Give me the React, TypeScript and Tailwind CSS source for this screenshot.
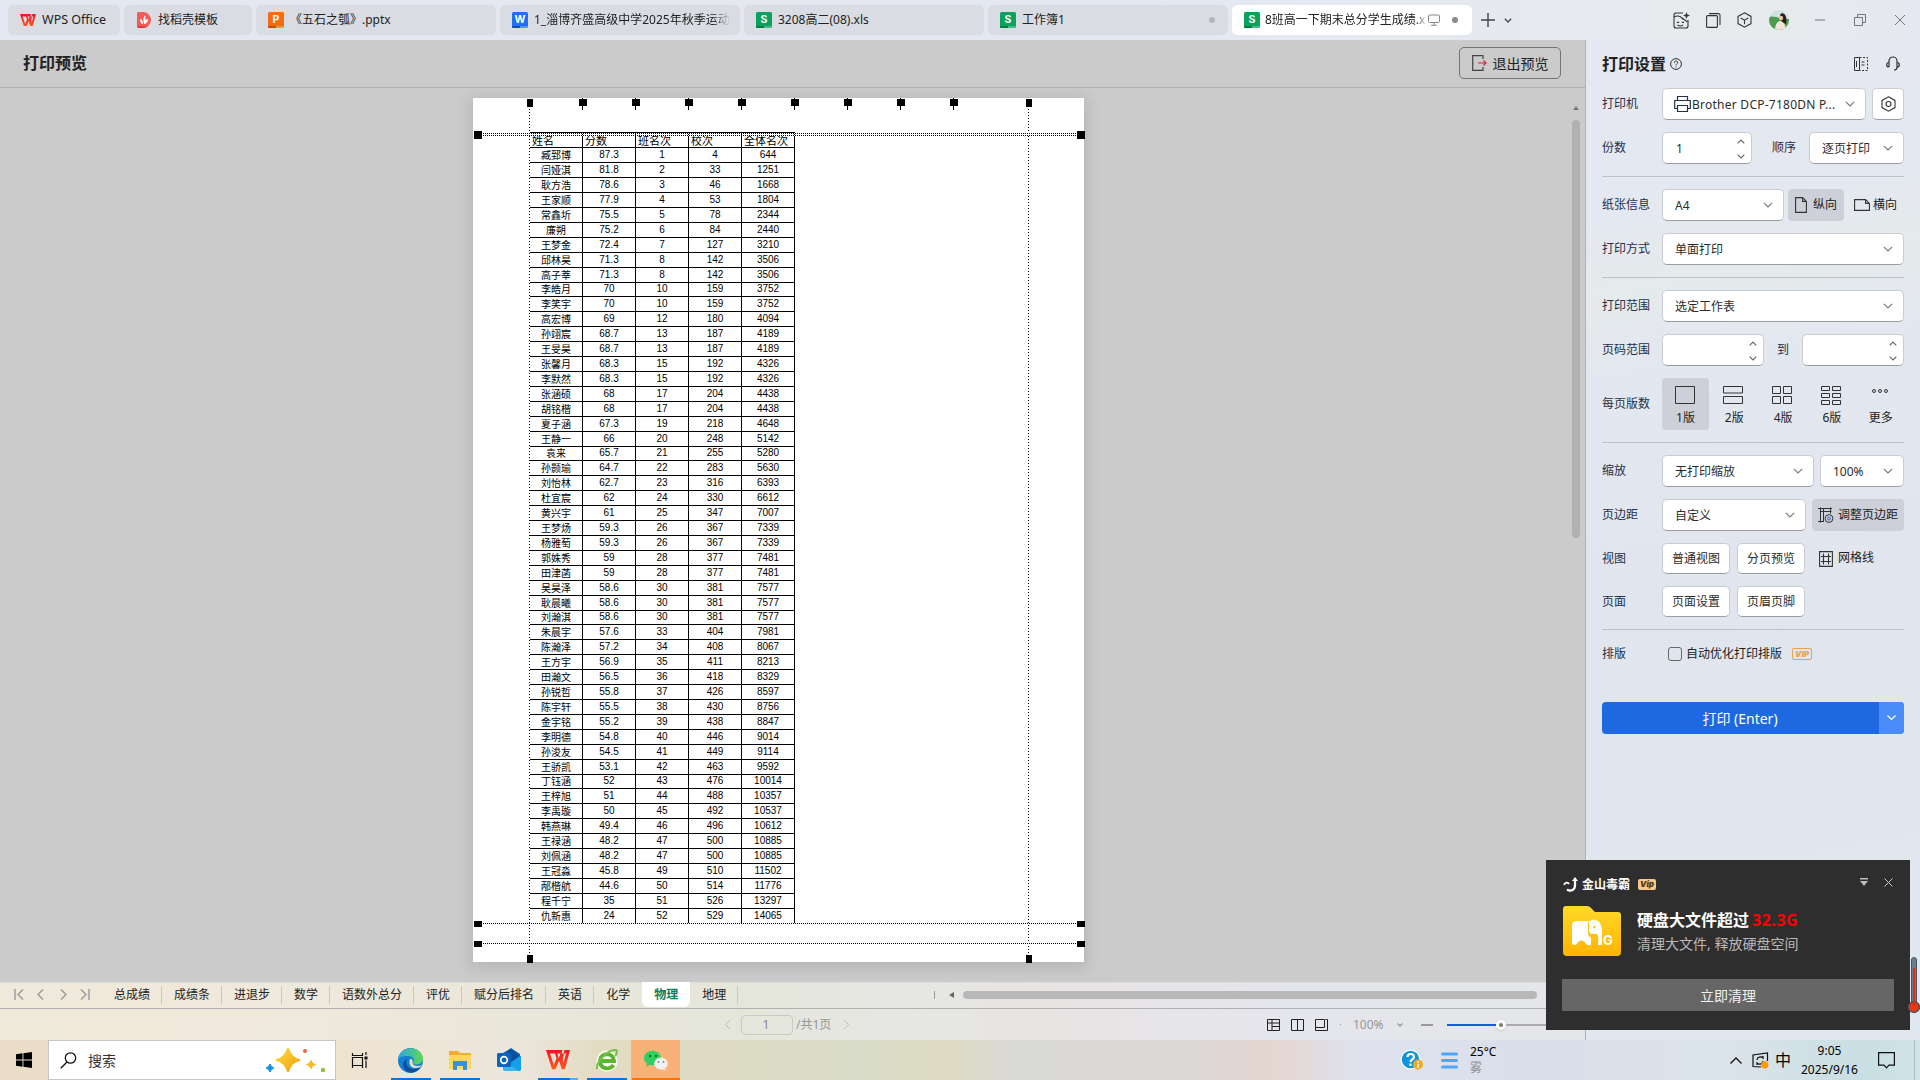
import React from "react";

const rows: [string, string, string, string, string][] = [
  ["臧郅博", "87.3", "1", "4", "644"], ["闫娅淇", "81.8", "2", "33", "1251"], ["耿方浩", "78.6", "3", "46", "1668"],
  ["王家顺", "77.9", "4", "53", "1804"], ["常鑫圻", "75.5", "5", "78", "2344"], ["廉朔", "75.2", "6", "84", "2440"],
  ["王梦金", "72.4", "7", "127", "3210"], ["邱林昊", "71.3", "8", "142", "3506"], ["高子莘", "71.3", "8", "142", "3506"],
  ["李皓月", "70", "10", "159", "3752"], ["李笑宇", "70", "10", "159", "3752"], ["高宏博", "69", "12", "180", "4094"],
  ["孙翊宸", "68.7", "13", "187", "4189"], ["王旻昊", "68.7", "13", "187", "4189"], ["张馨月", "68.3", "15", "192", "4326"],
  ["李默然", "68.3", "15", "192", "4326"], ["张涵硕", "68", "17", "204", "4438"], ["胡铭楷", "68", "17", "204", "4438"],
  ["夏子涵", "67.3", "19", "218", "4648"], ["王静一", "66", "20", "248", "5142"], ["袁来", "65.7", "21", "255", "5280"],
  ["孙颢瑜", "64.7", "22", "283", "5630"], ["刘怡林", "62.7", "23", "316", "6393"], ["杜宜宸", "62", "24", "330", "6612"],
  ["黄兴宇", "61", "25", "347", "7007"], ["王梦炀", "59.3", "26", "367", "7339"], ["杨雅萄", "59.3", "26", "367", "7339"],
  ["郭姝秀", "59", "28", "377", "7481"], ["田津菡", "59", "28", "377", "7481"], ["吴昊泽", "58.6", "30", "381", "7577"],
  ["耿晨曦", "58.6", "30", "381", "7577"], ["刘瀚淇", "58.6", "30", "381", "7577"], ["朱晨宇", "57.6", "33", "404", "7981"],
  ["陈瀚泽", "57.2", "34", "408", "8067"], ["王方宇", "56.9", "35", "411", "8213"], ["田瀚文", "56.5", "36", "418", "8329"],
  ["孙锐哲", "55.8", "37", "426", "8597"], ["陈宇轩", "55.5", "38", "430", "8756"], ["金宇铭", "55.2", "39", "438", "8847"],
  ["李明德", "54.8", "40", "446", "9014"], ["孙浚友", "54.5", "41", "449", "9114"], ["王骄凯", "53.1", "42", "463", "9592"],
  ["丁钰涵", "52", "43", "476", "10014"], ["王梓旭", "51", "44", "488", "10357"], ["李禹璇", "50", "45", "492", "10537"],
  ["韩燕琳", "49.4", "46", "496", "10612"], ["王禄涵", "48.2", "47", "500", "10885"], ["刘佩涵", "48.2", "47", "500", "10885"],
  ["王冠淼", "45.8", "49", "510", "11502"], ["邴楷航", "44.6", "50", "514", "11776"], ["程千宁", "35", "51", "526", "13297"],
  ["仇新惠", "24", "52", "529", "14065"],
];

const Chev = ({ c = "" }: { c?: string }) => (
  <svg className={"shrink-0 " + c} width="10" height="6" viewBox="0 0 10 6" fill="none" stroke="#777" strokeWidth="1.1"><path d="M.8.8 5 5 9.2.8" /></svg>
);

const Spin = () => (
  <div className="flex flex-col gap-[10px]">
    <svg width="8" height="5" viewBox="0 0 8 5" fill="none" stroke="#666" strokeWidth="1.2"><path d="M.7 4.3 4 1l3.3 3.3" /></svg>
    <svg width="8" height="5" viewBox="0 0 8 5" fill="none" stroke="#666" strokeWidth="1.2"><path d="M.7.7 4 4 7.3.7" /></svg>
  </div>
);

const box = "flex shrink-0 items-center rounded-[5px] border border-[#c9ccd2] border-b-[#9a9ca2] bg-white text-[#2c2c2c]";

const Select = ({ w, text, pr = "pr-[10px]" }: { w: string; text: string; pr?: string }) => (
  <div className={`${box} ${w} ${pr} h-[32px] justify-between pl-[12px]`}>
    <span className="whitespace-nowrap pt-[1px]">{text}</span><Chev />
  </div>
);

const Row = ({ label, h, children }: { label: string; h: string; children: React.ReactNode }) => (
  <div className={`flex items-center ${h}`}>
    <span className="w-[60px] shrink-0 text-[#26304a]">{label}</span>
    {children}
  </div>
);

const Rule = ({ m }: { m: string }) => <div className={`h-px w-[302px] bg-[#bfc2c7] ${m}`} />;

const FileIcon = ({ bg, dark, letter }: { bg: string; dark: string; letter: string }) => (
  <svg className="shrink-0" width="16" height="16" viewBox="0 0 16 16">
    <rect width="16" height="16" rx="1.5" fill={bg} />
    <path d="M0 14h8v2H1.500A1.500 1.500 0 0 1 0 14.500z" fill={dark} />
    <path d="M8 14h8v.5a1.500 1.500 0 0 1-1.500 1.500H8z" fill="#fff" opacity=".25" />
    <text x="8" y="10.800" textAnchor="middle" fontSize="10.500" fontWeight="700" fill="#fff" fontFamily="Inter">{letter}</text>
  </svg>
);

const Wps = ({ s }: { s: number }) => (
  <svg className="shrink-0" width={s} height={s * 0.8} viewBox="0 0 24 16" preserveAspectRatio="none">
    <defs><linearGradient id="wps" x1="0" y1="1" x2="0" y2="0"><stop stopColor="#ff5a1f" /><stop offset="1" stopColor="#f01428" /></linearGradient></defs>
    <path fill="url(#wps)" fillRule="evenodd" d="M0 0H16.500L15.500 3H11.500L12.700 7 14.500 3H18L16.800 7.500 17.500 11 20 3H17.500L18.500 0H24L19 16H15.800L13 9 9.500 16H6zM4 3L7.800 12.500 10.500 7 9 3z" />
  </svg>
);

const Tab = ({ w, children, active }: { w: string; children: React.ReactNode; active?: boolean }) => (
  <div className={`flex h-[30px] shrink-0 items-center whitespace-nowrap rounded-[6px] ${w} ${active ? "bg-white" : "bg-[#d9dce3]"}`}>{children}</div>
);

const TitleBar = () => (
  <header className="flex h-[40px] items-center gap-1 bg-[linear-gradient(90deg,#e4e8f2,#e5e8ef_35%,#e4e8f2_60%,#e7ebed_92%,#e5e8f0)] pl-2 text-[12px] text-[#222]">
    <Tab w="w-[112px] gap-[6px] pl-3"><Wps s={16} /><span className="text-[12.500px]">WPS Office</span></Tab>
    <Tab w="w-[128px] gap-[7px] pl-[13px]">
      <svg width="14" height="16" viewBox="0 0 14 16"><path d="M0 1.500A1.500 1.500 0 0 1 1.500 0H6a8 8 0 0 1 0 16H1.500A1.500 1.500 0 0 1 0 14.500z" fill="#f45b5b" /><path d="M0 14.300h10.500A8 8 0 0 1 6 16H1.500z" fill="#d93838" /><path d="M3 7c2 .5 3 2 3 5-2-.5-3-2-3-5zm4 5c-1-4-.5-7 1-9 1 3 .5 6-1 9zm0 0c.5-3 1.500-4.500 4-5-.2 3-1.500 4.500-4 5z" fill="#fff" /></svg>
      <span>找稻壳模板</span>
    </Tab>
    <Tab w="w-[240px] gap-[6px] pl-3"><FileIcon bg="#f66b12" dark="#c94c04" letter="P" /><span>《五石之瓠》.pptx</span></Tab>
    <Tab w="w-[240px] gap-[6px] pl-3"><FileIcon bg="#1f6ff5" dark="#0d4cc0" letter="W" /><span className="[mask-image:linear-gradient(90deg,#000_92%,transparent)]">1_淄博齐盛高级中学2025年秋季运动</span></Tab>
    <Tab w="w-[240px] gap-[6px] pl-3"><FileIcon bg="#0aa25c" dark="#067a43" letter="S" /><span>3208高二(08).xls</span></Tab>
    <Tab w="w-[240px] gap-[6px] pl-3"><FileIcon bg="#0aa25c" dark="#067a43" letter="S" /><span className="flex-1">工作簿1</span><i className="mr-[13px] size-[6px] rounded-full bg-[#b5b6ba]" /></Tab>
    <Tab active w="w-[240px] gap-[5px] pl-3">
      <FileIcon bg="#0aa25c" dark="#067a43" letter="S" />
      <span className="w-[162px] [mask-image:linear-gradient(90deg,#000_93%,transparent)]">8班高一下期末总分学生成绩.x</span>
      <svg className="-ml-[4px] shrink-0" width="12" height="12" viewBox="0 0 12 12" fill="none" stroke="#888"><rect x=".5" y="1" width="11" height="7.500" rx="1" /><path d="M6 8.500V11M3 11.300h6" /></svg>
      <i className="ml-[7px] size-[6px] rounded-full bg-[#8a8a8a]" />
    </Tab>
    <svg className="ml-[5px]" width="14" height="14" viewBox="0 0 14 14" stroke="#444" strokeWidth="1.400"><path d="M7 0v14M0 7h14" /></svg>
    <svg className="ml-[5px]" width="8" height="5" viewBox="0 0 8 5" fill="none" stroke="#444" strokeWidth="1.300"><path d="M.8.8 4 4 7.200.8" /></svg>
    <div className="ml-auto flex items-center pr-[15px]">
      <svg width="17" height="17" viewBox="0 0 17 17" fill="none" stroke="#333" strokeWidth="1.100"><path d="M10 1H3a2 2 0 0 0-2 2v11a2 2 0 0 0 2 2h10a2 2 0 0 0 2-2V8M1 5c3-1.500 6-1 8 1s4 2 5 4M4 10q1 1 2 0M9 10q1 1 2 0M4.500 13q3 2 5.500 0" /><path d="M13.500 0l.9 2.600 2.600.9-2.600.9-.9 2.600-.9-2.600-2.600-.9 2.600-.9z" fill="#333" stroke="none" /></svg>
      <svg className="ml-[16px]" width="15" height="15" viewBox="0 0 15 15" fill="none" stroke="#333" strokeWidth="1.100"><rect x=".6" y="2.600" width="10.800" height="11.800" rx="1" /><path d="M3 .6h9.500a1.500 1.500 0 0 1 1.500 1.500V12" /></svg>
      <svg className="ml-[16px]" width="15" height="16" viewBox="0 0 15 16" fill="none" stroke="#333" strokeWidth="1.100"><path d="M7.500.8l6.500 3.600v7.200l-6.500 3.600L1 11.600V4.400zM3.700 6l3.800 2.200L11.300 6M7.500 8.200v4" /></svg>
      <svg className="ml-[17px]" width="20" height="20" viewBox="0 0 20 20"><clipPath id="av"><circle cx="10" cy="10" r="10" /></clipPath><g clipPath="url(#av)"><rect width="20" height="20" fill="#cfe0e4" /><path d="M0 7c6-2 8 2 20 2v11H0z" fill="#4c9a50" /><path d="M11 5c2-4 8-1 6 9l-4-2z" fill="#2a1c18" /><path d="M6 20c0-6 3-9 5-9s6 3 6 9z" fill="#f3e3dc" /><circle cx="12" cy="8" r="2.200" fill="#e8c3ae" /></g></svg>
      <svg className="ml-[26px]" width="10" height="2"><path d="M0 1h10" stroke="#777" /></svg>
      <svg className="ml-[29px]" width="12" height="12" viewBox="0 0 12 12" fill="none" stroke="#777"><path d="M.5 3.500h8v8h-8zM3.500 3.500v-3h8v8h-3" /></svg>
      <svg className="ml-[29px]" width="10" height="10" viewBox="0 0 10 10" stroke="#777"><path d="M0 0l10 10M10 0L0 10" /></svg>
    </div>
  </header>
);

const cell = "flex w-[53px] items-center justify-center border-r border-black";
const DOTH = "absolute h-px bg-[repeating-linear-gradient(90deg,#000_0_1px,#fff_1px_2px)]";
const DOTV = "absolute w-px bg-[repeating-linear-gradient(180deg,#000_0_1px,#fff_1px_3px)]";
const colMarks = [106, 159, 212, 265, 318, 371, 424, 477];

const Paper = () => (
  <div className="relative ml-[473px] h-[864px] w-[611px] bg-white pl-[57px] pt-[34px] shadow-[0_3px_14px_3px_rgba(0,0,0,0.11)]">
    <div className="w-[265px] font-['Liberation_Sans','Noto_Sans_CJK_SC',sans-serif] text-[10px] leading-none text-black">
      <div className="flex h-[16px] border-y border-black text-[11px]">
        {["姓名", "分数", "班名次", "校次", "全体名次"].map((t) => (
          <div key={t} className="flex w-[53px] items-center whitespace-nowrap border-r border-black pl-[2px] pt-[2px]">{t}</div>
        ))}
      </div>
      {rows.map((r, i) => (
        <div key={i} className={`flex border-b border-black ${[9, 20, 31, 42].includes(i) ? "h-[14px]" : "h-[15px]"}`}>
          {r.map((v, j) => <div key={j} className={`${cell} ${j ? "pb-[1px]" : "pt-[1px]"}`}>{v}</div>)}
        </div>
      ))}
    </div>
    <div className={`${DOTV} left-[56px] top-[8px] h-[850px]`} />
    <div className={`${DOTV} left-[555px] top-[8px] h-[850px]`} />
    <div className={`${DOTH} left-[8px] top-[35px] w-[596px]`} />
    <div className={`${DOTH} left-[8px] top-[37px] w-[596px]`} />
    <div className={`${DOTH} left-[8px] top-[825px] w-[596px]`} />
    <div className={`${DOTH} left-[8px] top-[845px] w-[596px]`} />
    {colMarks.map((x) => (
      <div key={x} className="absolute top-0 flex h-[12px] w-[7px] justify-center" style={{ left: x }}>
        <i className="h-[12px] w-px bg-black" /><i className="absolute left-0 top-[1px] h-[7px] w-[8px] bg-black" />
      </div>
    ))}
    <i className="absolute left-[54px] top-[1px] h-[8px] w-[6px] bg-black" />
    <i className="absolute left-[553px] top-[1px] h-[8px] w-[6px] bg-black" />
    <i className="absolute left-[54px] top-[857px] h-[8px] w-[6px] bg-black" />
    <i className="absolute left-[553px] top-[857px] h-[8px] w-[6px] bg-black" />
    <i className="absolute left-[1px] top-[33px] h-[8px] w-[8px] bg-black" />
    <i className="absolute left-[604px] top-[33px] h-[8px] w-[8px] bg-black" />
    <i className="absolute left-[1px] top-[823px] h-[6px] w-[8px] bg-black" />
    <i className="absolute left-[604px] top-[823px] h-[6px] w-[8px] bg-black" />
    <i className="absolute left-[1px] top-[843px] h-[6px] w-[8px] bg-black" />
    <i className="absolute left-[604px] top-[843px] h-[6px] w-[8px] bg-black" />
  </div>
);

const Preview = () => (
  <main className="flex h-[942px] w-full flex-col bg-[#cbcbcb]">
    <div className="flex h-[48px] shrink-0 items-center justify-between border-b border-[#b1b1b1] pb-[1px] pl-[23px] pr-[24px]">
      <h1 className="text-[16px] font-bold text-[#222]">打印预览</h1>
      <button className="flex h-[32px] w-[102px] items-center justify-center gap-[6px] rounded-[5px] border border-[#747474] text-[14px] text-[#222]">
        <svg width="15" height="16" viewBox="0 0 15 16" fill="none" stroke="#444" strokeWidth="1.200"><path d="M11 4V.7H.7v14.600H11V12" /><path d="M6 8h8M11.500 5.500 14 8l-2.500 2.500" stroke="#d0284a" /></svg>
        退出预览
      </button>
    </div>
    <div className="flex min-h-0 flex-1 justify-between overflow-hidden">
      <div className="pt-[10px]"><Paper /></div>
      <div className="flex w-[18px] flex-col items-center pt-[18px]">
        <svg width="6" height="4"><path d="M3 0l3 4H0z" fill="#777" /></svg>
        <div className="mt-[10px] h-[418px] w-[8px] rounded-full bg-[#b1b1b1]" />
      </div>
    </div>
  </main>
);

const sheets = ["总成绩", "成绩条", "进退步", "数学", "语数外总分", "评优", "赋分后排名", "英语", "化学", "物理", "地理"];

const Nav = ({ d }: { d: string }) => (
  <svg width="10" height="11" viewBox="0 0 10 11" fill="none" stroke="#999" strokeWidth="1.400"><path d={d} /></svg>
);

const BottomBars = () => (
  <div className="bg-[linear-gradient(90deg,#efe9db,#efe8dc_20%,#e4e6d9_46%,#e6e7e4_58%,#e8e4e4_67%,#e5e6ec_80%,#e5e6e9)]">
    <div className="flex h-[27px] items-center border-b border-[#b0b0b0] border-t border-t-[#dcdcda] pb-[2px] text-[12px] text-[#222]">
      <div className="flex w-[102px] gap-[12px] pl-[14px]">
        <Nav d="M1 0v11M9 .5l-5 5 5 5" /><Nav d="M7 .5l-5 5 5 5" /><Nav d="M3 .5l5 5-5 5" /><Nav d="M9 0v11M1 .5l5 5-5 5" />
      </div>
      {sheets.map((s) => s === "物理"
        ? <div key={s} className="-mt-[1px] flex h-[25px] self-start items-center rounded-b-[6px] bg-white px-3 font-bold text-[#0b7d54]">{s}</div>
        : <div key={s} className={`flex h-[18px] items-center px-3 ${s === "化学" ? "" : "shadow-[inset_-1px_0_#c9c9bf]"}`}>{s}</div>)}
      <i className="ml-[196px] h-[8px] w-px bg-[#999]" />
      <svg className="ml-[14px]" width="5" height="6"><path d="M5 0v6L0 3z" fill="#666" /></svg>
      <div className="ml-[9px] h-[8px] w-[574px] rounded-full bg-[#b8b8b8]" />
    </div>
    <div className="flex h-[31px] items-center text-[12px] text-[#969696]">
      <svg className="ml-[725px]" width="6" height="11" fill="none" stroke="#bbb"><path d="M5.500.5l-5 5 5 5" /></svg>
      <div className="ml-[10px] flex h-[20px] w-[52px] items-center justify-center rounded-[4px] border border-[#c9cac4] pr-[2px] text-[#888]">1</div>
      <span className="ml-[3px] w-[42px]">/共1页</span>
      <svg className="ml-[5px]" width="6" height="11" fill="none" stroke="#bbb"><path d="M.5.5l5 5-5 5" /></svg>
      <svg className="ml-[418px]" width="62" height="12" viewBox="0 0 62 12" fill="none" stroke="#222"><path d="M.5.5h12v11H.5zM.5 4h12M5 .5v11M5 7.500h7.500M24.500.5h12v11h-12zM30.500.5v11M50.500.5h7v8h-9v-8zM48.500 11.500h12V.5h-2M48.500 8.500v3" /></svg>
      <i className="ml-[11px] size-[1px] bg-[#999]" />
      <span className="ml-[12px] w-[40px]">100%</span>
      <svg className="ml-[4px]" width="6" height="4" fill="none" stroke="#999" strokeWidth="1.300"><path d="M.5.5 3 3 5.500.5" /></svg>
      <i className="ml-[18px] h-[2px] w-[12px] bg-[#999]" />
      <div className="ml-[14px] flex w-[126px] items-center">
        <i className="h-[2px] w-[49px] bg-[#1a5fd0]" />
        <i className="flex size-[10px] items-center justify-center rounded-full border-[3px] border-white bg-[#777] shadow" />
        <i className="h-[2px] flex-1 bg-[#aaa]" />
      </div>
    </div>
  </div>
);

const Layout = ({ label, active, children }: { label: string; active?: boolean; children: React.ReactNode }) => (
  <div className={`flex h-[52px] w-[47px] shrink-0 flex-col items-center justify-between rounded-[4px] pb-[3px] pt-[8px] ${active ? "bg-[#cdd0d8]" : ""}`}>
    <svg className="mr-[2px]" width="20" height="19" viewBox="0 0 20 19" fill="none" stroke="#333" strokeWidth="1">{children}</svg>
    <span className="leading-[18px]">{label}</span>
  </div>
);

const Settings = () => (
  <aside className="flex h-[1000px] w-[335px] shrink-0 flex-col border-l border-[#b1b1b1] bg-[linear-gradient(170deg,#e5e8f1,#e4e8f1_17%,#e5eaeb_24%,#e3e7f0_33%,#e1e6ee_55%,#e0e7ef)] pl-4 text-[12px] text-[#222]">
    <div className="flex h-[48px] shrink-0 items-center pb-[1px] pr-[20px]">
      <h2 className="text-[16px] font-bold">打印设置</h2>
      <svg className="ml-[4px]" width="12" height="12" viewBox="0 0 12 12" fill="none" stroke="#333"><circle cx="6" cy="6" r="5.400" /><path d="M4.300 4.800c0-2.400 3.400-2.200 3.400-.2C7.700 6 6 5.800 6 7.300M6 8.400v1" /></svg>
      <svg className="ml-auto" width="14" height="14" viewBox="0 0 14 14" fill="none" stroke="#333"><path d="M5.500.5h-5v13h5zM7.500 5h3M7.500 8h3" /><path d="M5.500.5h8v13h-8" strokeDasharray="2 1.500" /><path d="M2.500 4v6" /></svg>
      <svg className="ml-[18px]" width="14" height="15" viewBox="0 0 14 15" fill="none" stroke="#333" strokeWidth="1.200"><path d="M3 11V5a4 4 0 0 1 8 0v6.500c0 1.500-1 2.500-3 2.500M3 6.500C1.500 6.500.7 7.500.7 8.700S1.500 11 3 11M11 6.500c1.500 0 2.300 1 2.300 2.200S12.500 11 11 11" /></svg>
    </div>
    <Row label="打印机" h="h-[32px]">
      <div className={`${box} h-[32px] w-[204px] pl-[11px] pr-[10px]`}>
        <svg className="shrink-0" width="17" height="16" viewBox="0 0 17 16" fill="none" stroke="#26304a" strokeWidth="1.200"><path d="M3.500 4.500v-4h10v4M3.500 12.500H.7v-8h15.600v8h-2.800M3.500 9.500h10v6h-10z" /></svg>
        <span className="ml-[1px] flex-1 whitespace-nowrap pt-[1px] text-[12px] tracking-[0.25px]">Brother DCP-7180DN P...</span><Chev />
      </div>
      <div className={`${box} ml-[6px] size-[32px] justify-center`}>
        <svg width="15" height="16" viewBox="0 0 15 16" fill="none" stroke="#333" strokeWidth="1.100"><path d="M7.500.8l6.500 3.600v7.200l-6.500 3.600L1 11.600V4.400z" /><circle cx="7.500" cy="8" r="2.500" /></svg>
      </div>
    </Row>
    <Row label="份数" h="mt-[12px] h-[32px]">
      <div className={`${box} h-[32px] w-[90px] justify-between pl-[13px] pr-[6px] pt-[1px]`}>1<Spin /></div>
      <span className="ml-[20px] w-[37px] shrink-0 text-[#26304a]">顺序</span>
      <Select w="w-[95px]" text="逐页打印" />
    </Row>
    <Rule m="mt-[12px]" />
    <Row label="纸张信息" h="mt-[12px] h-[32px]">
      <Select w="w-[122px]" text="A4" />
      <div className="ml-[4px] flex h-[32px] w-[56px] items-center justify-center gap-[6px] rounded-[4px] bg-[#cdd0d8]">
        <svg width="12" height="16" viewBox="0 0 12 16" fill="none" stroke="#333" strokeWidth="1.100"><path d="M.6.6h7l3.800 3.800v11H.6zM7.600.6v3.800h3.800" /></svg>纵向
      </div>
      <div className="ml-[10px] flex items-center gap-[3px] whitespace-nowrap">
        <svg width="16" height="12" viewBox="0 0 16 12" fill="none" stroke="#333" strokeWidth="1.100"><path d="M.6.6h11l3.800 3.800v7H.6zM11.600.6v3.800h3.800" /></svg>横向
      </div>
    </Row>
    <Row label="打印方式" h="mt-[12px] h-[32px]"><Select w="w-[242px]" text="单面打印" /></Row>
    <Rule m="mt-[12px]" />
    <Row label="打印范围" h="mt-[12px] h-[32px]"><Select w="w-[242px]" text="选定工作表" /></Row>
    <Row label="页码范围" h="mt-[12px] h-[32px]">
      <div className={`${box} h-[32px] w-[102px] justify-end pr-[6px] pt-[1px]`}><Spin /></div>
      <span className="w-[38px] text-center text-[#26304a]">到</span>
      <div className={`${box} h-[32px] w-[102px] justify-end pr-[6px] pt-[1px]`}><Spin /></div>
    </Row>
    <Row label="每页版数" h="mt-[12px] h-[52px]">
      <div className="flex gap-[1.800px]">
        <Layout active label="1版"><path d="M.5.5h19v17H.5z" /></Layout>
        <Layout label="2版"><path d="M.5.5h19v6.500H.5zM.5 10.500h19v7H.5z" /></Layout>
        <Layout label="4版"><path d="M.5.5h8v7h-8zM11.500.5h8v7h-8zM.5 10.500h8v7h-8zM11.500 10.500h8v7h-8z" /></Layout>
        <Layout label="6版"><path d="M.5.5h8v4h-8zM11.500.5h8v4h-8zM.5 7.500h8v4h-8zM11.500 7.500h8v4h-8zM.5 14.500h8v4h-8zM11.500 14.500h8v4h-8z" /></Layout>
        <Layout label="更多"><circle cx="4" cy="5" r="1.500" /><circle cx="10" cy="5" r="1.500" /><circle cx="16" cy="5" r="1.500" /></Layout>
      </div>
    </Row>
    <Rule m="mt-[12px]" />
    <Row label="缩放" h="mt-[12px] h-[32px]">
      <Select w="w-[152px]" text="无打印缩放" /><div className="w-[6px]" /><Select w="w-[84px]" text="100%" />
    </Row>
    <Row label="页边距" h="mt-[12px] h-[32px]">
      <Select w="w-[144px]" text="自定义" />
      <div className="ml-[6px] flex h-[32px] w-[92px] items-center justify-center gap-[4px] whitespace-nowrap rounded-[4px] bg-[#cdd0d8]">
        <svg width="16" height="16" viewBox="0 0 16 16" fill="none" stroke="#333"><path d="M2.500.5v15M0 1.500h14M0 14.500h6M5.500 1v13M2.500 4.500h11M12.500.5v6" /><circle cx="11" cy="11.500" r="3.900" fill="#cdd0d8" /><circle cx="11" cy="11.500" r="1.500" stroke="#2b62d9" /></svg>调整页边距
      </div>
    </Row>
    <Row label="视图" h="mt-[12px] h-[31px]">
      <div className={`${box} h-[31px] w-[68px] justify-center`}>普通视图</div>
      <div className={`${box} ml-[7px] h-[31px] w-[68px] justify-center`}>分页预览</div>
      <svg className="ml-[14px]" width="14" height="16" viewBox="0 0 14 16" fill="none" stroke="#333" strokeWidth="1.100"><path d="M.6.6h12.800v14.800H.6zM4.500 2.500v11M9.500 2.500v11M2 5.500h10M2 10.500h10" /></svg>
      <span className="ml-[5px] pb-[1px]">网格线</span>
    </Row>
    <Row label="页面" h="mt-[12px] h-[31px]">
      <div className={`${box} h-[31px] w-[68px] justify-center`}>页面设置</div>
      <div className={`${box} ml-[7px] h-[31px] w-[68px] justify-center`}>页眉页脚</div>
    </Row>
    <Rule m="mt-[12px]" />
    <Row label="排版" h="mt-[14px] h-[20px]">
      <i className="ml-[6px] size-[14px] rounded-[3px] border border-[#666]" />
      <span className="ml-[4px]">自动优化打印排版</span>
      <span className="ml-[10px] flex h-[12px] w-[20px] items-center justify-center rounded-[2px] border border-[#e3a359] font-['Inter',sans-serif] text-[8px] font-black italic text-[#e3a359]">VIP</span>
    </Row>
    <div className="mt-[38px] flex h-[32px] w-[302px] shrink-0 overflow-hidden rounded-[4px] bg-[#1e69e0] text-[14px] text-white">
      <div className="flex flex-1 items-center justify-center pr-[1px]">打印 (Enter)</div>
      <div className="flex w-[25px] items-center justify-center bg-[#4a8df8]"><svg width="9" height="6" fill="none" stroke="#fff" strokeWidth="1.200"><path d="M.5.5l4 4 4-4" /></svg></div>
    </div>
  </aside>
);

const Popup = () => (
  <div className="absolute left-[1546px] top-[860px] flex h-[170px] w-[364px] flex-col bg-[#2e2e2e] px-4 text-white">
    <div className="flex h-[48px] items-center pl-[1px]">
      <svg width="16" height="15" viewBox="0 0 16 15" fill="none" stroke="#fff" strokeWidth="1.800"><path d="M1 8c1-3 4-3 5-1" /><path d="M4 12.500c4 2.500 8 0 8-4V3" strokeWidth="2.300" /><path d="M9 4l3-4 3 4z" fill="#fff" stroke="none" /></svg>
      <b className="ml-[3px] pt-[1px] text-[12px]">金山毒霸</b>
      <span className="ml-[8px] flex h-[11px] w-[18px] items-center justify-center rounded-[2px] bg-[#f3c98b] font-['Inter',sans-serif] text-[8px] font-black italic text-[#5a3510]">Vip</span>
      <div className="ml-auto flex -mt-[4px] items-center">
        <svg width="8" height="8"><path d="M0 0h8v1.500H0zM0 3h8L4 8z" fill="#bbb" /></svg>
        <svg className="ml-[16px] mr-[1px]" width="9" height="9" stroke="#ccc"><path d="M.5.5l8 8M8.500.5l-8 8" /></svg>
      </div>
    </div>
    <div className="flex pl-[1px]">
      <svg className="-mt-[2px]" width="58" height="50" viewBox="0 0 58 50">
        <defs><linearGradient id="fold" x1="0" y1="0" x2="0" y2="1"><stop stopColor="#ffd92a" /><stop offset="1" stopColor="#ffb400" /></linearGradient></defs>
        <path d="M0 3a3 3 0 0 1 3-3h21c2 0 3 1 4 2l4 4h23a3 3 0 0 1 3 3v37a4 4 0 0 1-4 4H4a4 4 0 0 1-4-4z" fill="url(#fold)" />
        <path d="M9 20q0-5 5-5h13q4-3 8 0 4 3 4 10v14h-4q1-9-1-11h-6l-2-3-1 4 3 3v7h-4q-6-9-11 0h-2q-2 0-2-2z" fill="#fff" />
        <path d="M25.500 16v9q1 4 4 4h3" fill="none" stroke="#ffc414" strokeWidth="1.200" />
        <circle cx="31.500" cy="21" r="1.300" fill="#ffc414" />
        <text x="40" y="39" fontFamily="Inter" fontSize="13" fontWeight="700" fill="#fff">G</text>
      </svg>
      <div className="ml-[16px]">
        <div className="mt-[1px] whitespace-nowrap text-[16px] font-bold leading-[22px]">硬盘大文件超过<span className="ml-[3px] font-['Open_Sans',sans-serif] tracking-[0.500px] text-[#f00]">32.3G</span></div>
        <div className="mt-[1px] text-[14px] leading-[24px] text-[#b9b9b9]">清理大文件, 释放硬盘空间</div>
      </div>
    </div>
    <button className="mt-[23px] h-[32px] w-[332px] bg-[#666] text-[14px] text-[#f0f0f0]">立即清理</button>
  </div>
);

const TaskItem = ({ children, line, bg = "" }: { children: React.ReactNode; line?: string; bg?: string }) => (
  <div className={`flex h-[40px] w-[49px] shrink-0 flex-col items-center ${bg}`}>
    <div className="flex h-[38px] items-center pt-[2px]">{children}</div>
    <i className={`h-[2px] ${line || ""}`} />
  </div>
);

const Taskbar = () => (
  <footer className="flex h-[40px] items-center bg-[linear-gradient(90deg,#eadcc6,#efe3cf_17%,#ece6dd_27%,#e3dcc3_31%,#dfdcc4_36%,#d9dcc8_45%,#dfdcc3_49%,#dadad8_53%,#dcd8d6_62%,#e5d5d0_66%,#dfe2ee_71%,#d9dfea_80%,#dbe3ea_90%,#c9dfe3_97%,#d0e4e8)] text-[12px] text-black">
    <svg className="ml-[16px]" width="16" height="16" viewBox="0 0 16 16"><path d="M0 2.300 6.500 1.300v6.200H0zM7.400 1.200 16 0v7.500H7.400zM0 8.400h6.500v6.300L0 13.700zM7.400 8.400H16V16l-8.600-1.200z" /></svg>
    <div className="ml-[16px] flex h-[40px] w-[288px] items-center border border-[#c5c5c5] bg-white pl-[11px]">
      <svg width="17" height="17" viewBox="0 0 17 17" fill="none" stroke="#111" strokeWidth="1.300"><circle cx="10.500" cy="6" r="5.200" /><path d="M7 10 .8 16.200" /></svg>
      <span className="ml-[11px] text-[14px] text-[#333]">搜索</span>
      <svg className="ml-auto mr-[8px]" width="64" height="28" viewBox="0 0 64 28">
        <defs><linearGradient id="sp" x1="0" y1="0" x2="1" y2="1"><stop stopColor="#ffda3c" /><stop offset="1" stopColor="#f0a010" /></linearGradient></defs>
        <path d="M25 3Q27.500 12 36 14 27.500 16 25 25 22.500 16 14 14 22.500 12 25 3z" fill="url(#sp)" stroke="url(#sp)" strokeLinejoin="round" strokeWidth="2.500" />
        <path d="M48 13q1 4.500 5.500 5.500-4.500 1-5.500 5.500-1-4.500-5.500-5.500 4.500-1 5.500-5.500z" fill="#f5b82a" />
        <path d="M7 18q1 3 4 4-3 1-4 4-1-3-4-4 3-1 4-4z" fill="#1591e0" stroke="#1591e0" />
        <circle cx="42" cy="5" r="2" fill="#e8663a" /><circle cx="60" cy="24" r="2.200" fill="#86c440" />
      </svg>
    </div>
    <svg className="ml-[15px] mr-[18px]" width="17" height="17" viewBox="0 0 17 17" fill="none" stroke="#111" strokeWidth="1.200"><path d="M1.500 1v2.500h10V1M1.500 16v-2.500h10V16M1.500 5v8M11.500 5v8M1.500 5.500h10M15 0v3M15 8.500V16" /><path d="M13.500 4.500h3v3h-3z" fill="#111" stroke="none" /></svg>
    <TaskItem line="w-[40px] bg-[#0a74d8]">
      <svg width="25" height="25" viewBox="0 0 24 24"><defs><linearGradient id="eg" x1="0" y1="0" x2="1" y2="0"><stop stopColor="#2aa7e8" /><stop offset="1" stopColor="#62d84e" /></linearGradient></defs><circle cx="12" cy="12" r="12" fill="#1580cf" /><path d="M.3 10C2-3 23-3 24 10c0 5-6 7-10 5 2-2 2-7-3-7C6 7 2 9 .3 10z" fill="url(#eg)" /><path d="M8 13c0 7 7 9 14 5.500-5 7.500-17 6.500-17-2.500 0-3 2-5 4.500-6Q8 11 8 13z" fill="#0d4f9f" /><path d="M12 10q2.500 1 2 4-.5 2 2.500 3 4 .8 6-1l-1.500 2.500q-7 2-9-1.500-2-4 0-7z" fill="#e6ded0" /></svg>
    </TaskItem>
    <TaskItem line="w-[40px] bg-[#0a74d8]">
      <svg width="22" height="20" viewBox="0 0 22 20"><path d="M0 1h9l2 2h11v15H0z" fill="#f0ae2c" /><path d="M0 5h22v14H0z" fill="#ffd665" /><path d="M4 20v-9h14v9h-4v-4H8v4z" fill="#3d8fdc" /></svg>
    </TaskItem>
    <TaskItem>
      <svg width="24" height="24" viewBox="0 0 24 24"><path d="M14 0l9 6v15q0 1-1 1H6V5z" fill="#1066b8" /><path d="M6 10l18-2v13q0 2-2 2H8q-2 0-2-2z" fill="#38b6f2" /><path d="M8 5l6-4 9 7-9 7-6-4z" fill="#0b4f9c" /><path d="M24 8v13q0 2-2 2l-11-7z" fill="#14a0e8" /><rect y="5" width="14" height="14" rx="1.500" fill="#0a63be" /><circle cx="7" cy="12" r="3.300" fill="none" stroke="#fff" strokeWidth="1.700" /></svg>
    </TaskItem>
    <TaskItem line="w-[40px] bg-[linear-gradient(90deg,#0a74d8_80%,#64a9e3_80%)]"><Wps s={24} /></TaskItem>
    <TaskItem line="w-[40px] bg-[#0a74d8]">
      <svg width="22" height="24" viewBox="0 0 22 24" fill="none"><circle cx="11" cy="13" r="10.500" fill="#fff" /><path d="M4 13h14c0-9-14-9-14 0 0 9 11 9 13.500 4" stroke="#5cb531" strokeWidth="4" /><path d="M1 21C0 14 12 1 20 2c2 1 0 5-1 6" stroke="#70c241" strokeWidth="2" /></svg>
    </TaskItem>
    <TaskItem bg="w-[48px] bg-[#f8b278]" line="w-[48px] bg-[#ff7300]">
      <svg width="24" height="21" viewBox="0 0 24 21"><ellipse cx="8.500" cy="8" rx="8.500" ry="7.300" fill="#31cf5f" /><path d="M3 13l-.5 4 4-3z" fill="#31cf5f" /><circle cx="6" cy="6" r="1.200" fill="#14693a" /><circle cx="12" cy="6" r="1.200" fill="#14693a" /><ellipse cx="17" cy="13.500" rx="6.800" ry="5.900" fill="#f1f1f1" /><path d="M20 18l2 2.500-5-1.500z" fill="#f1f1f1" /><circle cx="14.500" cy="12" r="1" fill="#888" /><circle cx="19.500" cy="12" r="1" fill="#888" /></svg>
    </TaskItem>
    <svg className="ml-auto" width="24" height="22" viewBox="0 0 24 22"><circle cx="10.500" cy="10.500" r="10" fill="#fff" /><circle cx="10.500" cy="10.500" r="8.700" fill="#0f95d8" /><path d="M7.500 8c0-4 6.500-4 6.500 0 0 2.500-3.500 2.500-3.500 5M10.500 14.500v2.500" stroke="#fff" strokeWidth="2.200" fill="none" /><circle cx="18" cy="15.500" r="5" fill="#f7a81b" /><path d="M18 12v2M18 15v4" stroke="#fff" strokeWidth="1.500" /></svg>
    <svg className="ml-[17px]" width="17" height="17" viewBox="0 0 17 17" stroke="#4ea5f8" strokeWidth="3" strokeLinecap="round"><path d="M1.500 2h14M1.500 8.500h14M1.500 15h14" /></svg>
    <div className="ml-[12px] w-[30px] leading-[16px]">25°C<br /><span className="text-[#8e9094]">雾</span></div>
    <svg className="ml-[230px]" width="12" height="7" fill="none" stroke="#111" strokeWidth="1.300"><path d="M.5 6.500 6 1l5.500 5.500" /></svg>
    <svg className="ml-[10px]" width="17" height="17" viewBox="0 0 17 17" fill="none" stroke="#111" strokeWidth="1.200"><path d="M15.500 9V1L1 3v11.500l8 .5M5 8c0-3 4-4 6-2V4M11 9c0 3-4 4-6 2v2" /><circle cx="12.800" cy="12.800" r="3.600" fill="#ff9800" stroke="none" /></svg>
    <span className="ml-[6px] text-[16px]">中</span>
    <div className="ml-[6px] w-[65px] text-center leading-[19px]">9:05<br />2025/9/16</div>
    <svg className="ml-[16px] mr-[19px]" width="17" height="17" viewBox="0 0 17 17" fill="none" stroke="#111" strokeWidth="1.200"><path d="M.6.6h15.800v12.500H11L8.500 15.800 6 13.100H.6z" /></svg>
    <i className="mr-[5px] h-[40px] w-px bg-[#a9bcc2]" />
  </footer>
);

export default function App() {
  return (
    <div className="relative h-[1080px] w-[1920px] overflow-hidden font-['Noto_Sans','Noto_Sans_CJK_SC',sans-serif]">
      <TitleBar />
      <div className="flex">
        <div className="w-[1585px]"><Preview /><BottomBars /></div>
        <Settings />
      </div>
      <Taskbar />
      <Popup />
      <svg className="absolute left-[1907px] top-[957px]" width="13" height="57" viewBox="0 0 13 57"><rect x="4.500" y=".5" width="5" height="46" rx="2.500" fill="#6c7d8c" stroke="#465663" /><circle cx="7" cy="50" r="5.500" fill="#e03a18" stroke="#465663" strokeWidth="1.300" /><path d="M7 11v38" stroke="#e02a14" strokeWidth="2" /></svg>
    </div>
  );
}
